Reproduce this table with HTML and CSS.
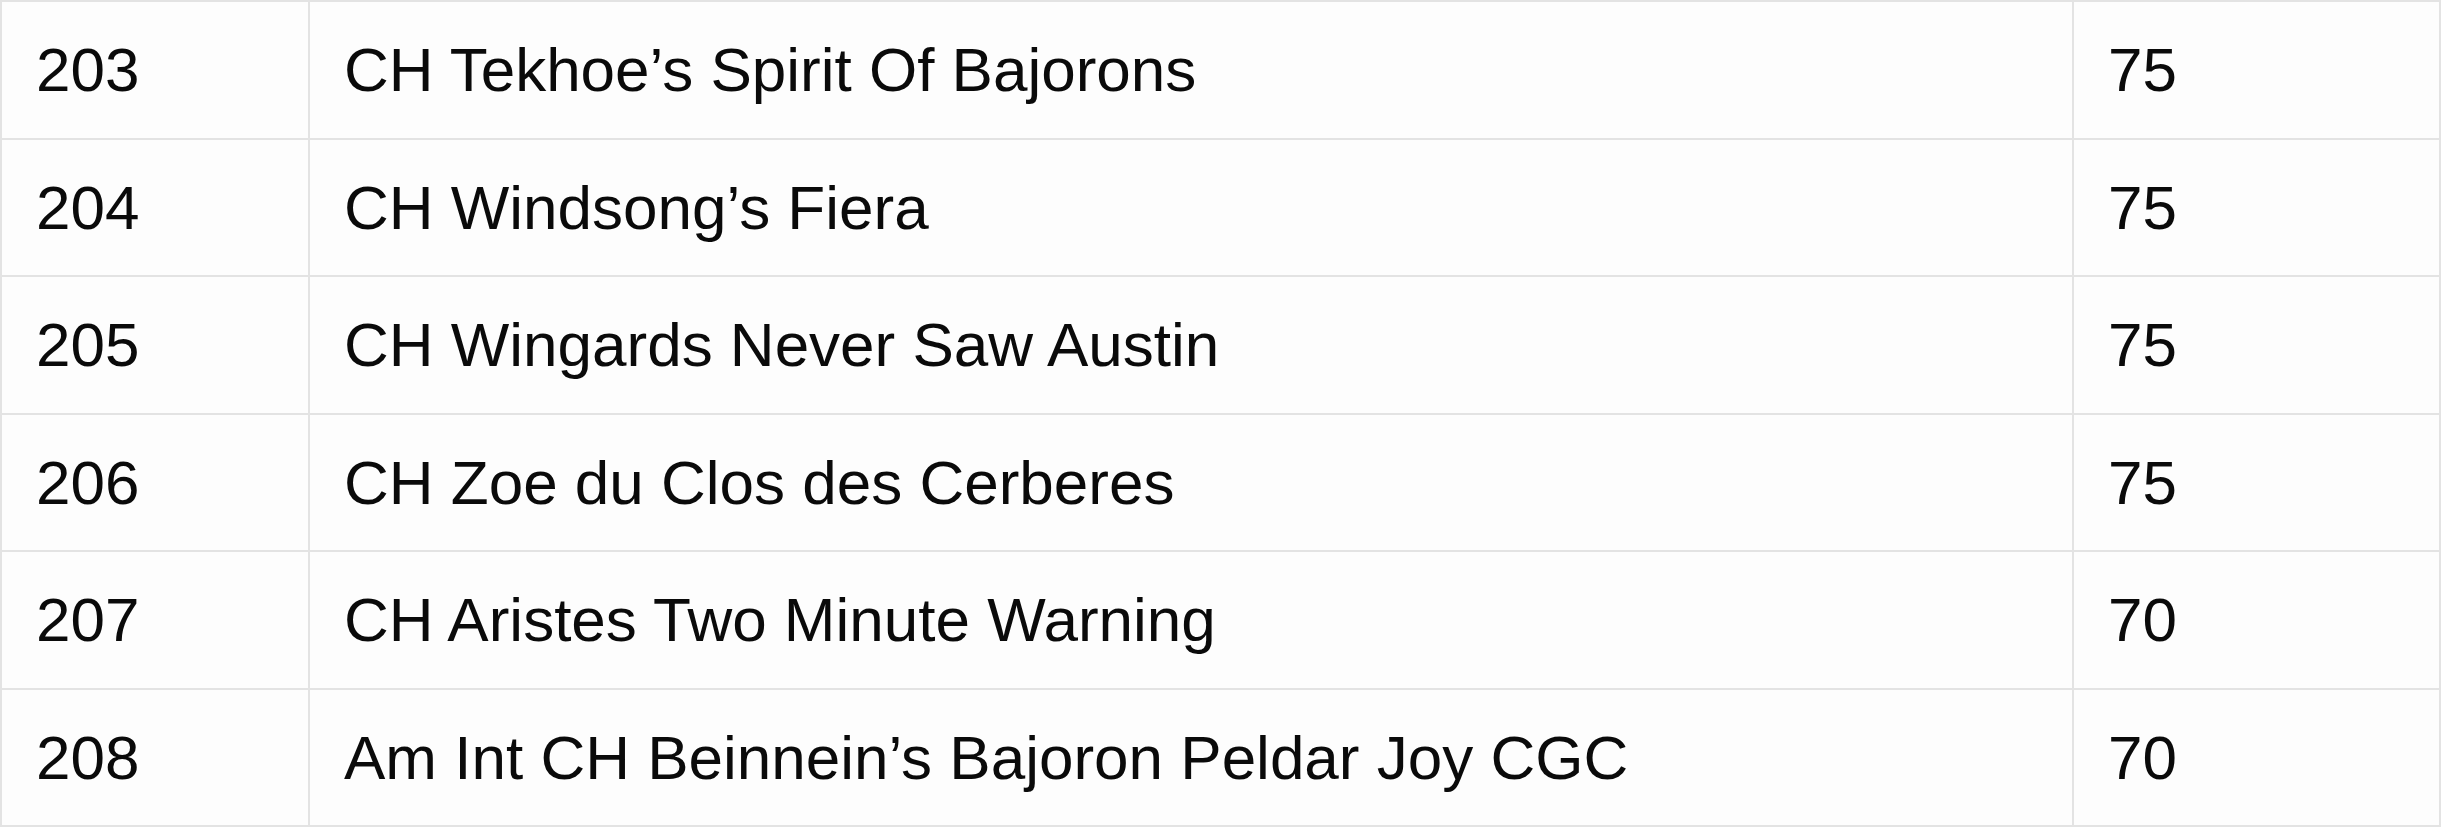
FILE: index.html
```html
<!DOCTYPE html>
<html>
<head>
<meta charset="utf-8">
<link rel="stylesheet" href="styles.css">
</head>
<body>
<table class="scores">
  <colgroup>
    <col class="c-rank">
    <col class="c-name">
    <col class="c-pts">
  </colgroup>
  <tbody>
    <tr><td>203</td><td>CH Tekhoe’s Spirit Of Bajorons</td><td>75</td></tr>
    <tr><td>204</td><td>CH Windsong’s Fiera</td><td>75</td></tr>
    <tr><td>205</td><td>CH Wingards Never Saw Austin</td><td>75</td></tr>
    <tr><td>206</td><td>CH Zoe du Clos des Cerberes</td><td>75</td></tr>
    <tr><td>207</td><td>CH Aristes Two Minute Warning</td><td>70</td></tr>
    <tr><td>208</td><td>Am Int CH Beinnein’s Bajoron Peldar Joy CGC</td><td>70</td></tr>
  </tbody>
</table>
</body>
</html>
```
FILE: styles.css
```css
html, body {
  margin: 0;
  padding: 0;
  background: #ffffff;
}
.scores {
  border-collapse: collapse;
  table-layout: fixed;
  width: 2439px;
  background: #fdfdfd;
  font-family: "Liberation Sans", Arial, sans-serif;
  font-size: 62px;
  color: #0a0a0a;
}
.c-rank { width: 308px; }
.c-name { width: 1764px; }
.c-pts { width: 367px; }
.scores tr {
  height: 137.5px;
}
.scores td {
  border: 2px solid #e3e3e3;
  padding: 0 0 0 34px;
  vertical-align: middle;
  white-space: nowrap;
}
```
